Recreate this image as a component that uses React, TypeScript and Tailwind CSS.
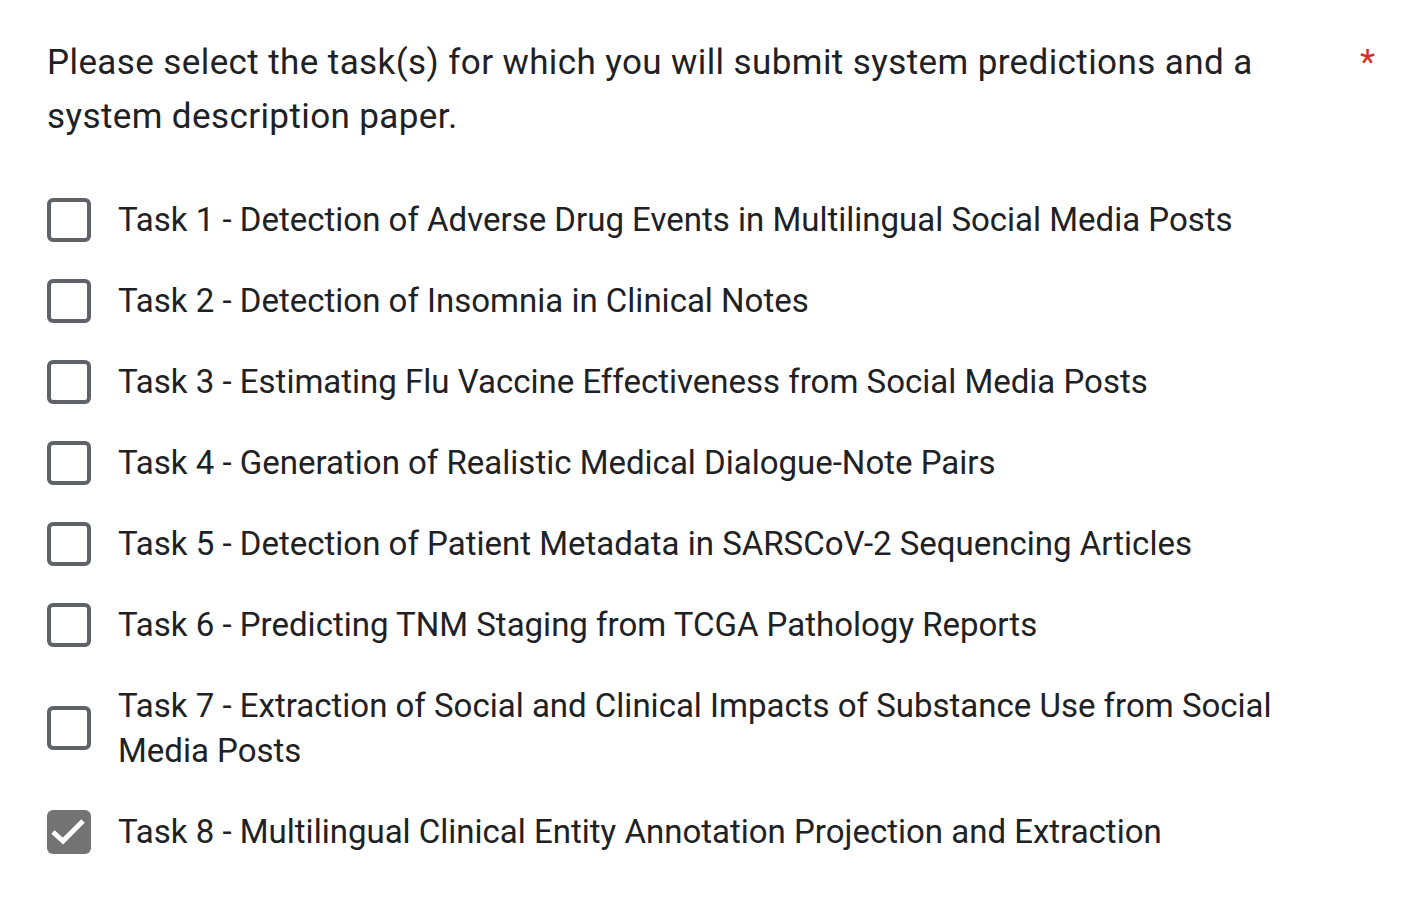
const tasks = [
  "Task 1 - Detection of Adverse Drug Events in Multilingual Social Media Posts",
  "Task 2 - Detection of Insomnia in Clinical Notes",
  "Task 3 - Estimating Flu Vaccine Effectiveness from Social Media Posts",
  "Task 4 - Generation of Realistic Medical Dialogue-Note Pairs",
  "Task 5 - Detection of Patient Metadata in SARSCoV-2 Sequencing Articles",
  "Task 6 - Predicting TNM Staging from TCGA Pathology Reports",
  "Task 7 - Extraction of Social and Clinical Impacts of Substance Use from Social Media Posts",
  "Task 8 - Multilingual Clinical Entity Annotation Projection and Extraction",
];

function Checkbox({ checked }: { checked: boolean }) {
  if (checked) {
    return (
      <div className="w-[44px] h-[44px] shrink-0 rounded-[6px] bg-[#737373] flex items-center justify-center">
        <svg width="44" height="44" viewBox="0 0 44 44">
          <path
            d="M6 32 L16 41 L36 21"
            transform="translate(0,-10)"
            fill="none"
            stroke="white"
            strokeWidth="5"
          />
        </svg>
      </div>
    );
  }
  return (
    <div className="w-[44px] h-[44px] shrink-0 rounded-[6px] border-[4.5px] border-[#5f6368] bg-white" />
  );
}

export default function App() {
  return (
    <div
      className="min-h-screen bg-white pl-[47px] pr-[39px] pt-[36px] text-[#202124]"
      style={{ fontFamily: "Roboto, 'Liberation Sans', sans-serif" }}
    >
      <div className="flex">
        <h1 className="flex-1 pr-[80px] text-[35px] leading-[54px] font-normal tracking-[0.4px]">
          Please select the task(s) for which you will submit system predictions and a system description paper.
        </h1>
        <span className="text-[#d93025] text-[35px] leading-[54px]">*</span>
      </div>

      <div className="mt-[35px] flex flex-col">
        {tasks.map((t, i) => (
          <label key={i} className="flex items-center gap-[27px] py-[18px] cursor-pointer">
            <Checkbox checked={i === 7} />
            <span className="text-[33px] leading-[45px] pr-[60px]">{t}</span>
          </label>
        ))}
      </div>
    </div>
  );
}
